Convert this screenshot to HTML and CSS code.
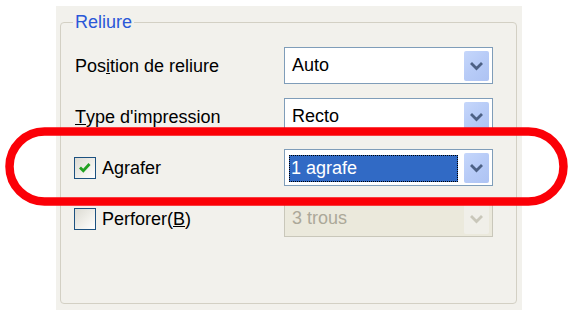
FILE: index.html
```html
<!DOCTYPE html>
<html lang="fr">
<head>
<meta charset="utf-8">
<title>Reliure</title>
<link rel="stylesheet" href="styles.css">
</head>
<body>
<div class="stage">
  <div class="panel">
    <fieldset class="group">
      <legend class="group-title">Reliure</legend>
      <div class="grid">
        <div class="label">Pos<u>i</u>tion de reliure</div>
        <div class="combo">
          <span class="combo-text">Auto</span>
          <span class="combo-btn"><svg viewBox="0 0 25 30" width="25" height="30"><path d="M8 13 L12.5 17.5 L17 13" fill="none" stroke="#4d6185" stroke-width="2.8" stroke-linecap="square"/></svg></span>
        </div>

        <div class="label"><u>T</u>ype d'impression</div>
        <div class="combo">
          <span class="combo-text">Recto</span>
          <span class="combo-btn"><svg viewBox="0 0 25 30" width="25" height="30"><path d="M8 13 L12.5 17.5 L17 13" fill="none" stroke="#4d6185" stroke-width="2.8" stroke-linecap="square"/></svg></span>
        </div>

        <div class="label check-label">
          <span class="checkbox checked"><svg viewBox="0 0 20 20" width="20" height="20"><path d="M5 9.5 L8.3 12.8 L14.5 6" fill="none" stroke="#21a121" stroke-width="2.8"/></svg></span>
          <span>Agrafer</span>
        </div>
        <div class="combo">
          <span class="combo-sel">1 agrafe</span>
          <span class="combo-btn"><svg viewBox="0 0 25 30" width="25" height="30"><path d="M8 13 L12.5 17.5 L17 13" fill="none" stroke="#4d6185" stroke-width="2.8" stroke-linecap="square"/></svg></span>
        </div>

        <div class="label check-label">
          <span class="checkbox"></span>
          <span>Perforer(<u>B</u>)</span>
        </div>
        <div class="combo disabled">
          <span class="combo-text">3 trous</span>
          <span class="combo-btn"><svg viewBox="0 0 25 30" width="25" height="30"><path d="M8 13 L12.5 17.5 L17 13" fill="none" stroke="#c9c7ba" stroke-width="2.8" stroke-linecap="square"/></svg></span>
        </div>
      </div>
    </fieldset>
  </div>
  <svg class="highlight-ring" width="564" height="80" viewBox="0 0 564 80">
    <rect x="4.5" y="4.5" width="554" height="70" rx="35" ry="35" fill="none" stroke="#fb0007" stroke-width="8.5"/>
  </svg>
</div>
</body>
</html>
```

FILE: styles.css
```css
html, body {
  margin: 0;
  padding: 0;
  background: #ffffff;
}

body {
  font-family: "Liberation Sans", Arial, sans-serif;
  font-size: 18px;
  color: #000;
}

.stage {
  position: relative;
  width: 576px;
  height: 310px;
  overflow: hidden;
}

.panel {
  margin: 6px 0 0 56px;
  width: 466px;
  height: 304px;
  box-sizing: border-box;
  padding: 6px 5px 6px 4px;
  background: #f2f1ec;
}

.group {
  margin: 0;
  height: 100%;
  box-sizing: border-box;
  border: 1px solid #d3d0c4;
  border-radius: 4px;
  padding: 15px 14px 0 14px;
}

.group-title {
  color: #2a58d8;
  padding: 0 2px;
  margin-left: -2px;
  line-height: 20px;
}

.grid {
  display: grid;
  grid-template-columns: 209px 209px;
  grid-auto-rows: 37px;
  row-gap: 14px;
}

.label {
  display: flex;
  align-items: center;
  line-height: 20px;
}

.check-label {
  gap: 6px;
  margin-left: -1px;
}

.checkbox {
  width: 20px;
  height: 20px;
  border: 1px solid #1c5180;
  background: linear-gradient(135deg, #dcdbd3 0%, #f0efea 55%, #ffffff 100%);
  display: flex;
}

.combo {
  display: flex;
  align-items: center;
  border: 1px solid #7f9db9;
  background: #fff;
  box-sizing: border-box;
  padding: 0 3px 0 4px;
}

.combo-text {
  flex: 1;
  padding-left: 3px;
}

.combo-sel {
  flex: 1;
  align-self: stretch;
  margin: 5px 6px 3px 0;
  background: #316ac5;
  color: #fff;
  outline: 1px dotted #000;
  outline-offset: -1px;
  padding-left: 2px;
  display: flex;
  align-items: center;
}

.combo-btn {
  width: 25px;
  height: 30px;
  border-radius: 2px;
  background: linear-gradient(135deg, #c6d7fb 0%, #b7cbf7 50%, #aec3f3 100%);
  display: flex;
}

.combo.disabled {
  background: #ebe9dc;
  border-color: #c9c7ba;
  color: #aca899;
}

.combo.disabled .combo-btn {
  background: #f0efe9;
}

.highlight-ring {
  position: absolute;
  left: 5px;
  top: 127px;
}
```
